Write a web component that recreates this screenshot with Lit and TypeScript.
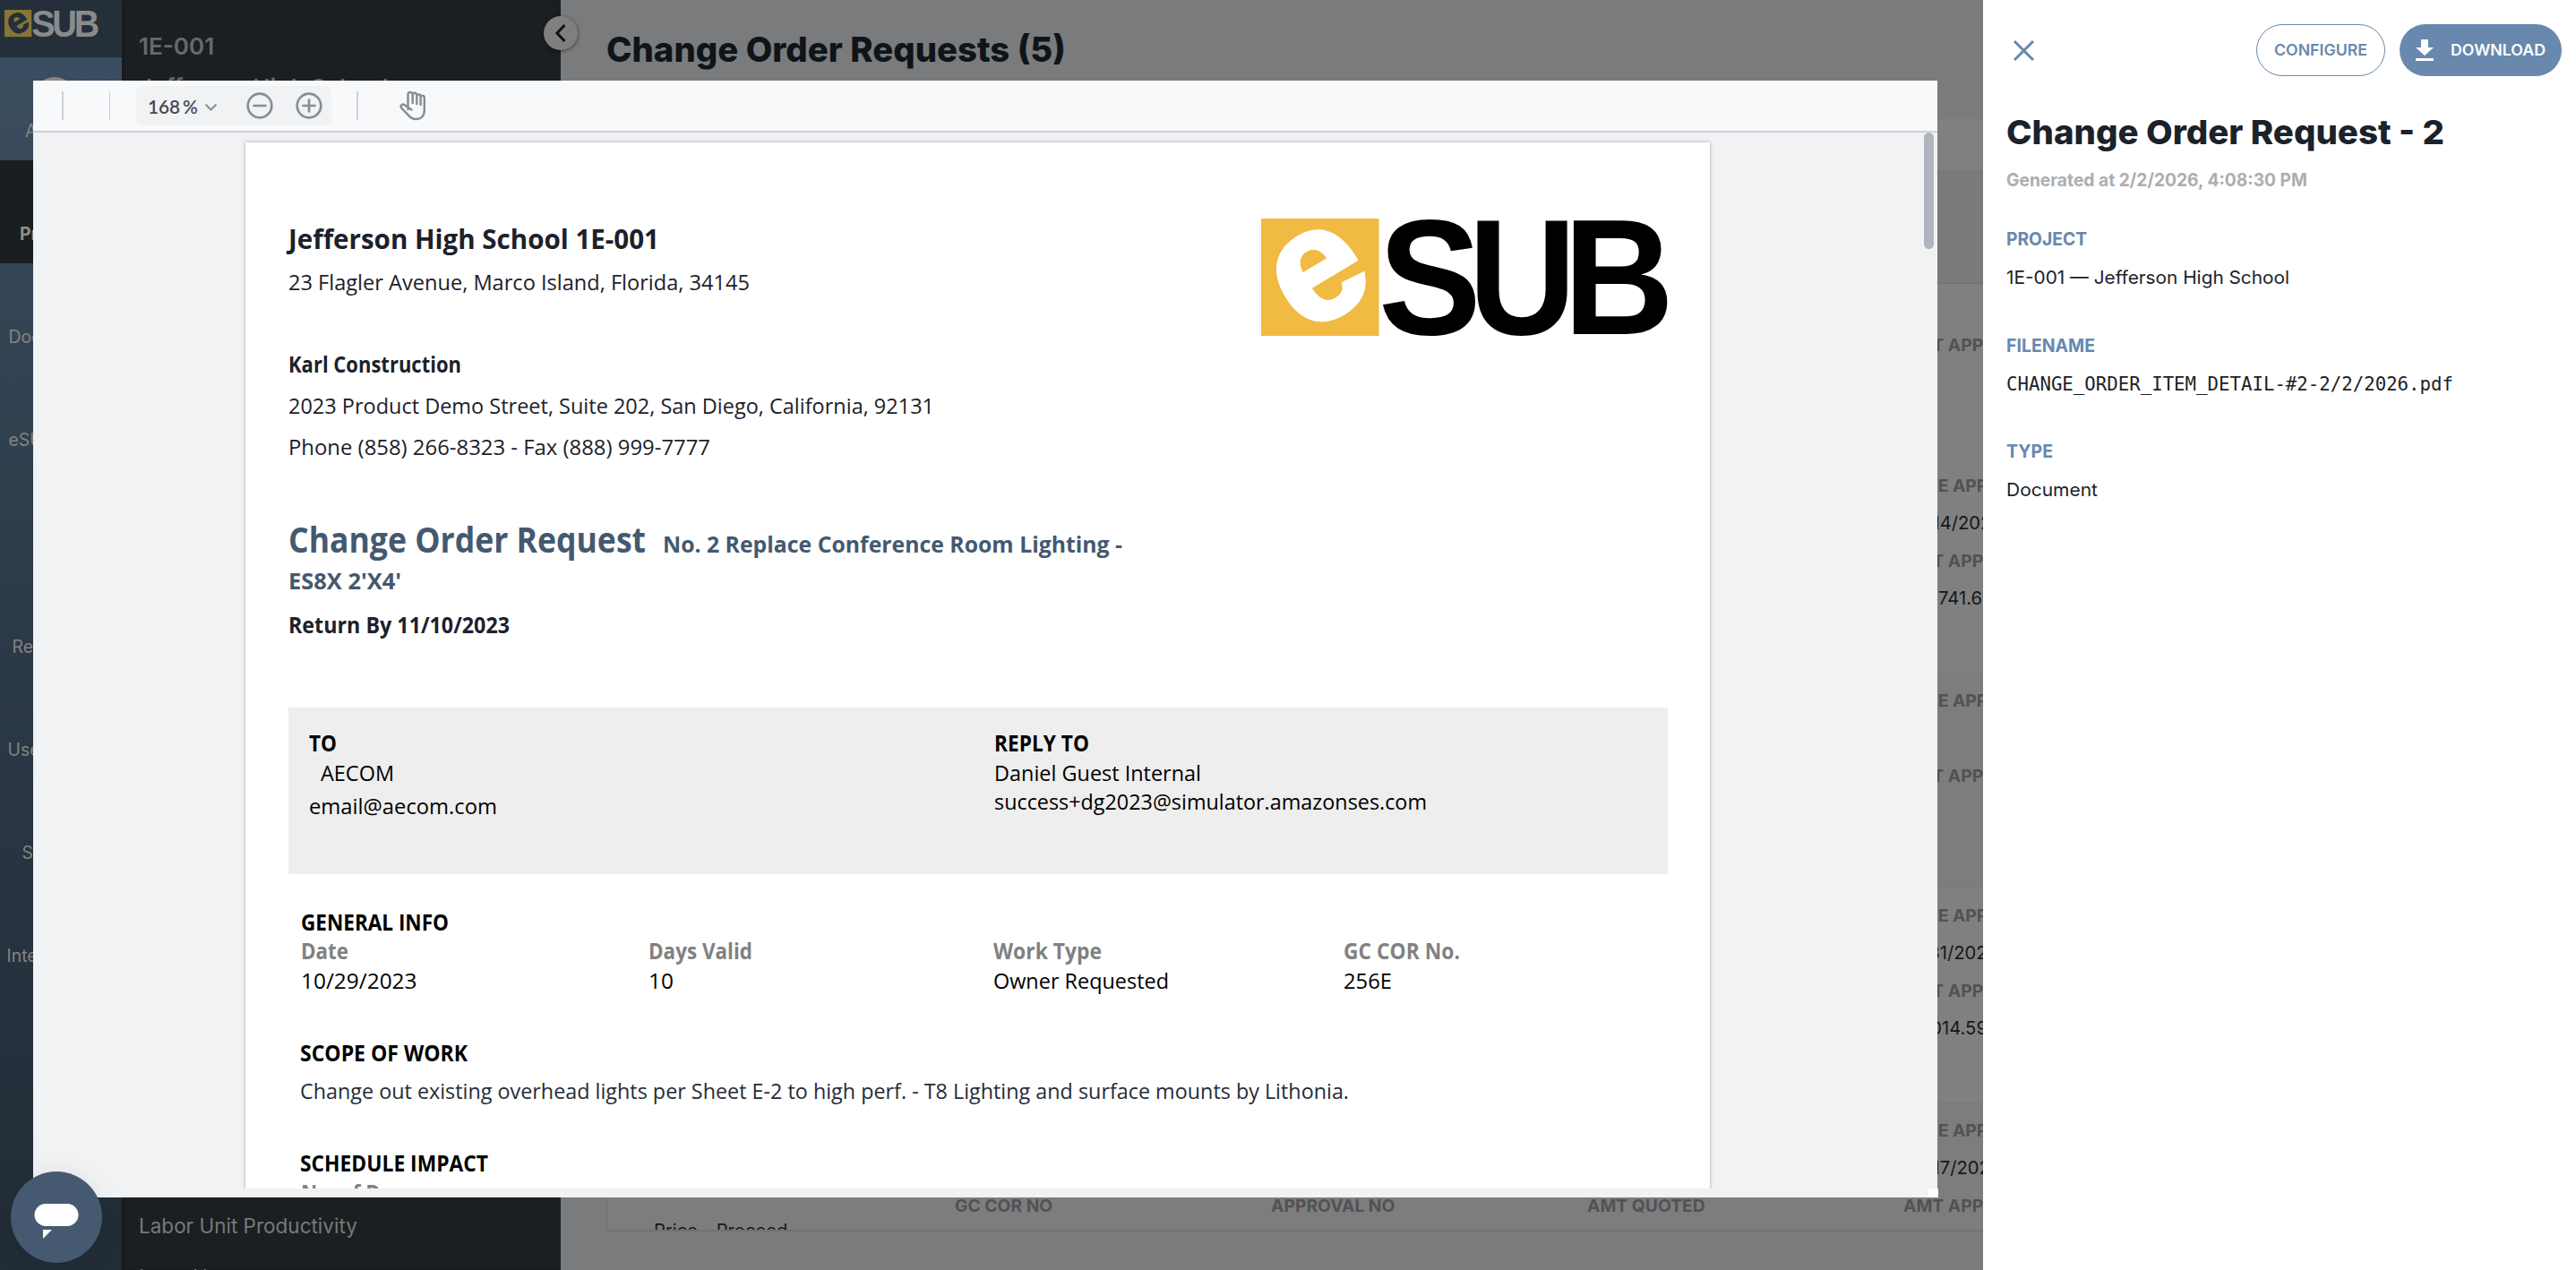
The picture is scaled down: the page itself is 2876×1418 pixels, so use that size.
import { LitElement, html, css, svg, nothing } from "lit";
import { customElement, property } from "lit/decorators.js";

/** A run of text that is stretched horizontally to a known width, as a PDF text layer does. */
@customElement("text-run")
class TextRun extends LitElement {
  @property({ type: Number }) w = 0;
  static styles = css`
    :host { display: block; white-space: pre; }
    .box { display: block; }
    .run { display: inline-block; transform-origin: 0 50%; }
  `;
  render() {
    return html`<span class="box" style="width:${this.w}px"><span class="run"><slot></slot></span></span>`;
  }
  async firstUpdated() {
    await document.fonts.ready;
    const run = this.renderRoot.querySelector(".run") as HTMLElement;
    if (this.w && run.offsetWidth) {
      run.style.transform = `scaleX(${this.w / run.getBoundingClientRect().width})`;
    }
  }
}

@customElement("esub-logo")
class EsubLogo extends LitElement {
  static styles = css`
    :host { display: block; line-height: 0; }
    .mark { width: 100%; height: auto; overflow: visible; }
    .tile { fill: var(--tile, #f1ba42); }
    .e { fill: var(--e, #fff); stroke: var(--e, #fff); stroke-width: 5; }
    .sub { fill: var(--sub, #000); }
    text { font-family: "Liberation Sans", Arial, sans-serif; font-weight: 700; }
  `;
  render() {
    return html`<svg class="mark" viewBox="0 0 456 131">
      <rect class="tile" width="131.5" height="131"></rect>
      <text class="e" font-size="178" text-anchor="middle" transform="translate(66 65) rotate(-31)" x="0" y="46">e</text>
      <g class="sub" font-size="183">
        <text transform="translate(131 129) scale(.94 1)">S</text>
        <text transform="translate(231.5 129) scale(.91 1)">U</text>
        <text transform="translate(337.5 129) scale(.935 1)">B</text>
      </g>
    </svg>`;
  }
}

const NAV = [
  { label: "A", pad: 28 },
  { label: "Pr", pad: 22, active: true },
  { label: "Doc", pad: 9.5 },
  { label: "eSU", pad: 9.5 },
  { label: "", pad: 0 },
  { label: "Re", pad: 13.5 },
  { label: "Use", pad: 8.5 },
  { label: "S", pad: 24.5 },
  { label: "Inte", pad: 7.5 },
];

const ROWS = [
  { date: "08/14/2023", amount: "$14,741.65" },
  { date: "", amount: "" },
  { date: "10/31/2023", amount: "$3,014.59" },
];

const INFO = [
  { k: "Date", kw: 53, v: "10/29/2023", vw: 129.5 },
  { k: "Days Valid", kw: 116, v: "10", vw: 28 },
  { k: "Work Type", kw: 121, v: "Owner Requested", vw: 196 },
  { k: "GC COR No.", kw: 130, v: "256E", vw: 54 },
];

@customElement("app-root")
class AppRoot extends LitElement {
  static styles = css`
    :host {
      display: block; position: relative; width: 2876px; height: 1418px; overflow: hidden;
      font-family: Inter, "Liberation Sans", sans-serif; background: #7a7b7d;
    }
    * { box-sizing: border-box; }
    .page { display: flex; height: 1418px; }

    .rail { width: 136px; flex: none; display: flex; flex-direction: column; background: linear-gradient(#3b4d60 64px, #354656 300px, #2b3846 760px, #232e39 1300px, #212c36); }
    .brand { height: 64px; padding: 11px 0 0 5px; background: #242f39; }
    .brand esub-logo { width: 105px; --tile: #877536; --e: #242f39; --sub: #8b8b8b; }
    .nav { height: 115.2px; padding-top: 69.7px; font-size: 19.4px; line-height: 24px; color: #858381; white-space: nowrap; overflow: hidden; flex: none; }
    .nav.active { background: #1a1e20; font-weight: 700; color: #8f8d8b; }
    .nav.first { padding-top: 22px; display: flex; flex-direction: column; }
    .avatar { width: 46px; height: 46px; border-radius: 50%; background: #8a8886; margin-left: 38px; margin-bottom: 1.7px; flex: none; }
    .first .cap { flex: none; }

    .panel { width: 490px; flex: none; background: #1b1f21; padding: 36px 0 0 19px; display: flex; flex-direction: column; box-shadow: inset 3px 0 3px rgba(0,0,0,.15); }
    .proj { font-size: 26px; line-height: 32px; font-weight: 600; color: #676a6b; white-space: nowrap; }
    .proj + .proj { margin-top: 13.5px; }
    .links { margin-top: auto; height: 63.5px; font-size: 22.5px; line-height: 28px; color: #76797b; display: flex; flex-direction: column; gap: 29px; }

    .main { flex: 1; min-width: 0; display: flex; flex-direction: column; background: #7a7b7d; }
    .head { height: 133px; padding: 31px 0 0 51px; font-size: 38.5px; line-height: 48px; font-weight: 800; color: #0f1419; flex: none; }
    .filters { height: 57px; background: #808080; flex: none; }
    .spacer { height: 126px; background: #797a7c; flex: none; }
    .list { margin-left: 51px; height: 1059px; border: 1px solid #707173; border-width: 1px 0 2px 1px; overflow: hidden; flex: none; background: #808080; font-size: 20.2px; line-height: 24px; white-space: nowrap; }
    .row { height: 240px; display: flex; padding: 17.5px 0 0 52px; background: #808080; border-top: 1px solid #7a7a7b; overflow: hidden; }
    .row.alt { background: #7d7d7d; }
    .row.top { height: 194px; padding-top: 55.5px; border-top: 0; }
    .desc { width: 336px; flex: none; padding-top: 112px; color: #15191d; }
    .cell { width: 353px; flex: none; display: flex; flex-direction: column; gap: 18px; }
    .lab { font-weight: 700; color: #505254; height: 24px; font-size: 19.3px; }
    .val { color: #14181c; height: 24px; }

    .toggle { position: absolute; left: 607px; top: 18px; width: 38px; height: 38px; border-radius: 50%; background: #7f7f7f; box-shadow: 0 1px 4px rgba(0,0,0,.5); display: grid; place-items: center; }

    .viewer { position: absolute; left: 37px; top: 90px; width: 2126px; height: 1247px; background: #f1f2f4; display: flex; flex-direction: column; }
    .tools { height: 58px; flex: none; background: #f8f9fb; border-bottom: 2px solid #cdd0d8; display: flex; padding: 6px 0 0 32px; font-family: Lato, sans-serif; }
    .bar { width: 2px; height: 32px; margin-top: 6px; background: #cfd1d9; }
    .bar.thin { width: 1px; margin-left: 51px; }
    .bar.third { margin-left: 28px; }
    .zoom { margin-left: 29px; width: 218px; height: 44px; border-radius: 7px; background: #f1f2f4; display: flex; padding-left: 13px; color: #454b53; font-weight: 600; font-size: 20.8px; line-height: 46px; }
    .num { width: 39px; } .pct { width: 24px; }
    .chev { margin-top: 19px; } .minus { margin: 7px 0 0 32px; } .plus { margin: 7px 0 0 25px; }
    .hand { margin: 5px 0 0 45px; }
    .stage { display: flex; height: 1179px; flex: none; overflow: hidden; }
    .sheet { margin: 11px 0 0 237px; width: 1635px; height: 1200px; background: #fff; box-shadow: 0 0 4px rgba(0,0,0,.32); padding: 90.5px 47px 0 48px; color: #1c212b; font-family: "Open Sans", Lato, sans-serif; font-variant-ligatures: none; font-size: 24.2px; line-height: 32px; flex: none; }
    .thumb { margin-left: 239px; width: 11px; height: 130px; border-radius: 6px; background: #aeb5bf; flex: none; }
    .corner { width: 11px; height: 10px; background: #fff; margin-left: 2116px; }
    .b { font-weight: 700; }
    .title { font-size: 30.8px; }
    .top { display: flex; }
    .addr { width: 1085px; }
    .addr > .street { margin-top: 17px; }
    .docmark { width: 456px; height: 131px; margin-top: -5.5px; margin-right: -10px; margin-left: 1px; }
    .firm { margin-top: 16px; }
    .g14 { margin-top: 14px; }
    .cor { margin-top: 64.5px; display: flex; align-items: baseline; gap: 19px; color: #44596f; font-size: 25.6px; line-height: 44px; height: 44px; }
    .big { font-size: 38.5px; }
    .cont { margin-top: 9.5px; font-size: 25.6px; color: #44596f; height: 32px; }
    .ret { margin-top: 16.5px; }
    .box { margin-top: 76px; height: 186px; background: #eee; display: flex; padding: 24.6px 0 0 23px; color: #000; }
    .to { width: 765px; } .to .co { margin: 1px 0 0 13px; } .to .em { margin-top: 4.5px; }
    .reply > * + * { margin-top: .5px; }
    .sect { color: #000; padding-left: 14px; }
    .gen { margin-top: 38.4px; }
    .grid { display: grid; grid-template-columns: 388px 384.5px 391.5px 200px; padding-left: 14px; color: #000; row-gap: 1px; margin-top: .6px; }
    .key { color: #818181; }
    .scope { margin-top: 48.5px; padding-left: 13px; }
    .body { padding-left: 13px; margin-top: 10.2px; color: #262c38; }
    .sched { margin-top: 49.3px; padding-left: 13px; }
    .nod { padding-left: 14px; margin-top: .6px; }

    .chat { position: absolute; left: 12px; top: 1308px; width: 102px; height: 102px; border-radius: 50%; background: #455a70; box-shadow: 0 2px 30px rgba(0,0,0,.08); }

    .drawer { position: absolute; left: 2214px; top: 0; width: 662px; height: 1418px; background: #fff; padding: 27px 16px 0 25.5px; color: #1b222a; font-size: 20.2px; line-height: 28px; white-space: nowrap; }
    .acts { display: flex; height: 58px; align-items: center; }
    .close { margin-left: 7px; margin-right: auto; }
    .btn { height: 58px; border-radius: 29px; display: flex; align-items: center; font-size: 17.5px; font-weight: 600; line-height: 24px; }
    .conf { width: 144px; border: 1.5px solid #6888ad; color: #6888ad; padding-left: 19px; }
    .down { width: 181px; margin-left: 16px; background: #6888ad; color: #fff; padding-left: 18px; gap: 19px; }
    h1 { margin: 38.5px 0 0; font-size: 37.5px; line-height: 48px; font-weight: 800; }
    .gen-at { margin-top: 15.5px; font-weight: 700; color: #acaeb0; }
    .k { color: #6888ad; font-weight: 700; }
    .f1 { margin-top: 38px; } .f2 { margin-top: 47.5px; }
    .v { margin-top: 15px; }
    .mono { font-family: "DejaVu Sans Mono", monospace; font-size: 20.7px; }
  `;

  private cell(label: string, value = "", label2 = "", value2 = "") {
    return html`<div class="cell">
      <div class="lab">${label}</div><div class="val">${value}</div>
      <div class="lab">${label2}</div><div class="val">${value2}</div>
    </div>`;
  }

  private circleIcon(cls: string, plus: boolean) {
    return html`<svg class=${cls} width="30" height="30" viewBox="0 0 30 30" fill="none" stroke="#868e96" stroke-width="2.7" stroke-linecap="round">
      <circle cx="15" cy="15" r="13.3"></circle><path d="M8.500 15h13"></path>
      ${plus ? svg`<path d="M15 8.500v13"></path>` : nothing}
    </svg>`;
  }

  render() {
    return html`
      <div class="page">
        <div class="rail">
          <div class="brand"><esub-logo></esub-logo></div>
          ${NAV.map((n, i) => i === 0
            ? html`<div class="nav first"><div class="avatar"></div><div class="cap" style="padding-left:${n.pad}px">${n.label}</div></div>`
            : html`<div class="nav ${n.active ? "active" : ""}" style="padding-left:${n.pad}px">${n.label}</div>`)}
        </div>
        <div class="panel">
          <div class="proj">1E-001</div>
          <div class="proj">Jefferson High School</div>
          <div class="links"><div>Labor Unit Productivity</div><div>Input Hours</div></div>
        </div>
        <div class="main">
          <div class="head"><text-run w="513">Change Order Requests (5)</text-run></div>
          <div class="filters"></div>
          <div class="spacer"></div>
          <div class="list">
            <div class="row top"><div class="desc"></div>${["", "", "", "AMT APPROVED"].map((t) => this.cell(t))}</div>
            ${ROWS.map((r, i) => html`<div class="row ${i === 1 ? "alt" : ""}"><div class="desc"></div>
              ${this.cell("")}${this.cell("")}${this.cell("")}
              ${this.cell("DATE APPROVED", r.date, "AMT APPROVED", r.amount)}</div>`)}
            <div class="row alt"><div class="desc">Price - Proceed</div>
              ${this.cell("", "", "GC COR NO")}${this.cell("", "", "APPROVAL NO")}${this.cell("", "", "AMT QUOTED")}
              ${this.cell("DATE APPROVED", "09/17/2023", "AMT APPROVED")}</div>
          </div>
        </div>
      </div>
      <div class="toggle"><svg width="14" height="22" viewBox="0 0 14 22" fill="none" stroke="#111" stroke-width="3"><path d="M11.500 2 3 11l8.500 9"></path></svg></div>

      <div class="viewer">
        <div class="tools">
          <div class="bar"></div><div class="bar thin"></div>
          <div class="zoom">
            <span class="num">168</span><span class="pct">%</span>
            <svg class="chev" width="15" height="10" viewBox="0 0 15 10" fill="none" stroke="#8b929a" stroke-width="2.2"><path d="M1.500 1.500 7.500 7.500 13.500 1.500"></path></svg>
            ${this.circleIcon("minus", false)}${this.circleIcon("plus", true)}
          </div>
          <div class="bar third"></div>
          <svg class="hand" width="32" height="34" viewBox="0 0 32 34" fill="none" stroke="#868e96" stroke-width="2.5" stroke-linejoin="round" stroke-linecap="round">
            <path d="M10.500 21V4.500a2.600 2.600 0 0 1 5.200 0V14M15.700 4.800a2.300 2.300 0 0 1 4.600 .7V15M20.300 6a2.200 2.200 0 0 1 4.300 .3V16M24.600 7.200a2.200 2.200 0 0 1 4.200 .3V22c0 6-3.500 10-9.200 10-4.500 0-6.500-1.500-8.500-4.200L3.200 19.500c-1.700-2.500 .8-5 3.300-3.400L14.500 21.500"></path>
          </svg>
        </div>
        <div class="stage">
          <div class="sheet">
            <div class="top">
              <div class="addr">
                <text-run class="b title" w="414">Jefferson High School 1E-001</text-run>
                <text-run class="street" w="515">23 Flagler Avenue, Marco Island, Florida, 34145</text-run>
              </div>
              <esub-logo class="docmark"></esub-logo>
            </div>
            <div class="firm">
              <text-run class="b" w="193">Karl Construction</text-run>
              <text-run class="g14" w="721">2023 Product Demo Street, Suite 202, San Diego, California, 92131</text-run>
              <text-run class="g14" w="471">Phone (858) 266-8323 - Fax (888) 999-7777</text-run>
            </div>
            <div class="cor b"><text-run class="big" w="399">Change Order Request</text-run><text-run w="513">No. 2 Replace Conference Room Lighting -</text-run></div>
            <text-run class="cont b" w="126">ES8X 2'X4'</text-run>
            <text-run class="ret b" w="247">Return By 11/10/2023</text-run>
            <div class="box">
              <div class="to"><text-run class="b" w="31">TO</text-run><text-run class="co" w="82">AECOM</text-run><text-run class="em" w="210">email@aecom.com</text-run></div>
              <div class="reply"><text-run class="b" w="106">REPLY TO</text-run><text-run w="231">Daniel Guest Internal</text-run><text-run w="483">success+dg2023@simulator.amazonses.com</text-run></div>
            </div>
            <text-run class="sect gen b" w="165">GENERAL INFO</text-run>
            <div class="grid">
              ${INFO.map((f) => html`<text-run class="key b" w=${f.kw}>${f.k}</text-run>`)}
              ${INFO.map((f) => html`<text-run w=${f.vw}>${f.v}</text-run>`)}
            </div>
            <text-run class="sect scope b" w="187">SCOPE OF WORK</text-run>
            <text-run class="body" w="1171">Change out existing overhead lights per Sheet E-2 to high perf. - T8 Lighting and surface mounts by Lithonia.</text-run>
            <text-run class="sect sched b" w="210">SCHEDULE IMPACT</text-run>
            <text-run class="nod key b" w="126">No. of Days</text-run>
          </div>
          <div class="thumb"></div>
        </div>
        <div class="corner"></div>
      </div>

      <div class="chat"><svg width="102" height="102" viewBox="0 0 102 102" fill="#fff"><rect x="26.500" y="36" width="49" height="25" rx="12.500"></rect><path d="M36 65h10L36 75z"></path></svg></div>

      <div class="drawer">
        <div class="acts">
          <svg class="close" width="25" height="25" viewBox="0 0 25 25" fill="none" stroke="#6888ad" stroke-width="3"><path d="m2 2 21 21M23 2 2 23"></path></svg>
          <div class="btn conf"><text-run w="104">CONFIGURE</text-run></div>
          <div class="btn down">
            <svg width="20" height="24" viewBox="0 0 20 24" fill="#fff"><path d="M6 0h8v9h6L10 18 0 9h6zM0 21h20v3H0z"></path></svg>
            <text-run w="106">DOWNLOAD</text-run>
          </div>
        </div>
        <h1><text-run w="489">Change Order Request - 2</text-run></h1>
        <text-run class="gen-at" w="336">Generated at 2/2/2026, 4:08:30 PM</text-run>
        <text-run class="k f1" w="90">PROJECT</text-run>
        <text-run class="v" w="316">1E-001 — Jefferson High School</text-run>
        <text-run class="k f2" w="99">FILENAME</text-run>
        <text-run class="v mono" w="499">CHANGE_ORDER_ITEM_DETAIL-#2-2/2/2026.pdf</text-run>
        <text-run class="k f2" w="52">TYPE</text-run>
        <text-run class="v" w="102">Document</text-run>
      </div>
    `;
  }
}
